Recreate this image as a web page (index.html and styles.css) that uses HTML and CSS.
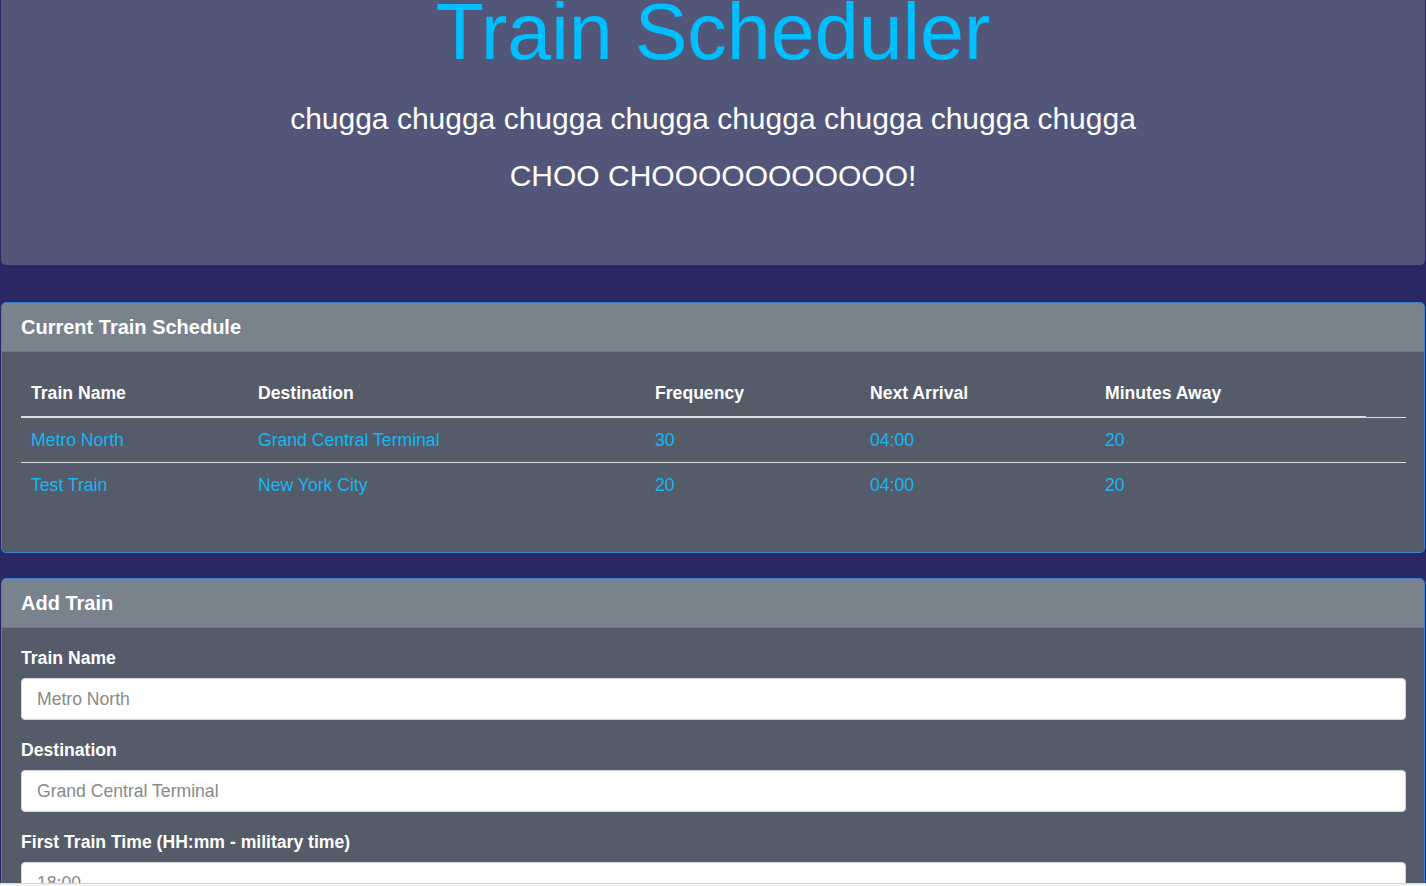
FILE: index.html
```html
<!DOCTYPE html>
<html lang="en">
<head>
<meta charset="utf-8">
<title>Train Scheduler</title>
<link rel="stylesheet" href="styles.css">
</head>
<body>
<div class="page">
  <header class="jumbotron">
    <h1 class="title">Train Scheduler</h1>
    <p class="lead">chugga chugga chugga chugga chugga chugga chugga chugga</p>
    <p class="lead">CHOO CHOOOOOOOOOOO!</p>
  </header>

  <section class="card schedule-card">
    <div class="card-header">Current Train Schedule</div>
    <div class="card-body">
      <table class="schedule">
        <thead>
          <tr>
            <th class="c1">Train Name</th>
            <th class="c2">Destination</th>
            <th class="c3">Frequency</th>
            <th class="c4">Next Arrival</th>
            <th class="c5">Minutes Away</th>
          </tr>
        </thead>
        <tbody>
          <tr>
            <td>Metro North</td>
            <td>Grand Central Terminal</td>
            <td>30</td>
            <td>04:00</td>
            <td>20</td>
            <td class="c6"></td>
          </tr>
          <tr>
            <td>Test Train</td>
            <td>New York City</td>
            <td>20</td>
            <td>04:00</td>
            <td>20</td>
            <td class="c6"></td>
          </tr>
        </tbody>
      </table>
    </div>
  </section>

  <section class="card add-card">
    <div class="card-header">Add Train</div>
    <div class="card-body form-body">
      <div class="form-group">
        <label class="form-label" for="name">Train Name</label>
        <input class="form-input" id="name" type="text" placeholder="Metro North">
      </div>
      <div class="form-group">
        <label class="form-label" for="dest">Destination</label>
        <input class="form-input" id="dest" type="text" placeholder="Grand Central Terminal">
      </div>
      <div class="form-group">
        <label class="form-label" for="first">First Train Time (HH:mm - military time)</label>
        <input class="form-input" id="first" type="text" placeholder="18:00">
      </div>
      <div class="form-group">
        <label class="form-label" for="freq">Frequency (min)</label>
        <input class="form-input" id="freq" type="text" placeholder="30">
      </div>
    </div>
  </section>
</div>
<div class="bottom-edge"></div>
</body>
</html>
```

FILE: styles.css
```css
html, body {
  margin: 0;
  padding: 0;
}

body {
  background: #2a2864;
  font-family: "Liberation Sans", Arial, sans-serif;
  font-size: 17.6px;
  color: #ffffff;
  overflow: hidden;
}

.page {
  display: flex;
  flex-direction: column;
  padding: 0 1px;
}

.jumbotron {
  display: flex;
  flex-direction: column;
  align-items: center;
  background: #525779;
  border-radius: 0 0 5px 5px;
  padding: 0 0 61px;
  margin-bottom: 37px;
}

.title {
  margin: -8px 0 0;
  font-size: 79px;
  font-weight: 400;
  line-height: 1;
  color: #00bfff;
}

.lead {
  margin: 0;
  font-size: 30px;
  line-height: 57px;
  color: #ffffff;
}

.title + .lead {
  margin-top: 19px;
}

.card {
  display: flex;
  flex-direction: column;
  border: 1px solid #3d7fd1;
  border-radius: 5px;
  background: #535c68;
  overflow: hidden;
}

.schedule-card {
  margin-bottom: 25px;
}

.card-header {
  background: #79838e;
  border-bottom: 1px solid #3d7fd1;
  height: 48px;
  display: flex;
  align-items: center;
  padding: 0 19px;
  font-size: 20px;
  font-weight: 700;
  color: #ffffff;
}

.card-body {
  padding: 18px 18px 45px 19px;
}

.schedule {
  width: 100%;
  border-collapse: collapse;
  font-size: 17.6px;
}

.schedule th {
  text-align: left;
  font-weight: 700;
  color: #ffffff;
  height: 47px;
  padding: 0 10px;
  vertical-align: middle;
  border-bottom: 2px solid #dcdcdc;
}

.schedule td {
  color: #16b6f7;
  height: 44px;
  padding: 0 10px;
  vertical-align: middle;
  border-top: 1px solid #dcdcdc;
}

.schedule .c1 { width: 227px; box-sizing: border-box; }
.schedule .c2 { width: 397px; box-sizing: border-box; }
.schedule .c3 { width: 215px; box-sizing: border-box; }
.schedule .c4 { width: 235px; box-sizing: border-box; }
.schedule .c5 { width: 271px; box-sizing: border-box; }
.schedule .c6 { width: 40px; box-sizing: border-box; }

.form-body {
  padding: 17px 18px 20px 19px;
  display: flex;
  flex-direction: column;
  gap: 17px;
}

.form-group {
  display: flex;
  flex-direction: column;
  gap: 7px;
}

.form-label {
  font-weight: 700;
  font-size: 17.6px;
  line-height: 26px;
  color: #ffffff;
}

.form-input {
  box-sizing: border-box;
  height: 42px;
  width: 100%;
  border: 1px solid #ced4da;
  border-radius: 4px;
  background: #ffffff;
  padding: 0 15px;
  font-family: "Liberation Sans", Arial, sans-serif;
  font-size: 17.6px;
  color: #495057;
}

.form-input::placeholder {
  color: #8a8a8a;
}

.bottom-edge {
  position: fixed;
  left: 0;
  right: 0;
  bottom: 0;
  height: 2px;
  background: #f4f4f4;
  border-top: 1px solid #d4d4d4;
}
```
